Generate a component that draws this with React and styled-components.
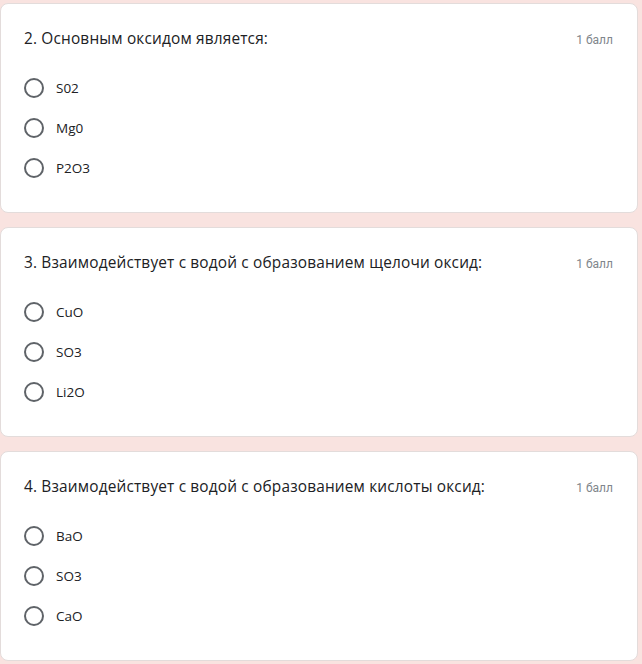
import React from "react";
import styled, { createGlobalStyle } from "styled-components";

const Global = createGlobalStyle`
  html, body { margin: 0; padding: 0; background: #f9e3e0; }
  body { font-family: Roboto, "Open Sans", Arial, sans-serif; }
`;

const Page = styled.div`
  width: 642px;
  height: 664px;
  background: #f9e3e0;
  padding: 3px 4px 0 0;
  box-sizing: border-box;
  display: flex;
  flex-direction: column;
  gap: 14px;
  overflow: hidden;
`;

const Card = styled.div`
  background: #fff;
  border: 1px solid #e3dcdb;
  border-radius: 8px;
  height: 210px;
  box-sizing: border-box;
  padding: 24px 24px 0 23px;
  display: flex;
  flex-direction: column;
`;

const Header = styled.div`
  display: flex;
  justify-content: space-between;
  align-items: baseline;
`;

const Title = styled.div`
  font-family: "Open Sans", Roboto, sans-serif;
  font-size: 15.4px;
  letter-spacing: 0.17px;
  color: #202124;
  line-height: 22px;
`;

const Points = styled.div`
  font-family: Roboto, sans-serif;
  font-size: 12px;
  color: #80868b;
`;

const Options = styled.div`
  display: flex;
  flex-direction: column;
  gap: 20px;
  margin-top: 28px;
`;

const Option = styled.label`
  display: flex;
  align-items: center;
  gap: 12px;
  height: 20px;
`;

const Radio = styled.span`
  width: 20px;
  height: 20px;
  box-sizing: border-box;
  border: 2px solid #5f6368;
  border-radius: 50%;
  flex-shrink: 0;
`;

const OptText = styled.span`
  font-family: "Open Sans", Roboto, sans-serif;
  font-size: 13.5px;
  color: #202124;
`;

const questions = [
  { title: "2. Основным оксидом является:", options: ["S02", "Mg0", "P2O3"] },
  { title: "3. Взаимодействует с водой с образованием щелочи оксид:", options: ["CuO", "SO3", "Li2O"] },
  { title: "4. Взаимодействует с водой с образованием кислоты оксид:", options: ["BaO", "SO3", "CaO"] },
];

export default function App() {
  return (
    <>
      <Global />
      <Page>
        {questions.map((q) => (
          <Card key={q.title}>
            <Header>
              <Title>{q.title}</Title>
              <Points>1 балл</Points>
            </Header>
            <Options>
              {q.options.map((o) => (
                <Option key={o}>
                  <Radio />
                  <OptText>{o}</OptText>
                </Option>
              ))}
            </Options>
          </Card>
        ))}
      </Page>
    </>
  );
}
